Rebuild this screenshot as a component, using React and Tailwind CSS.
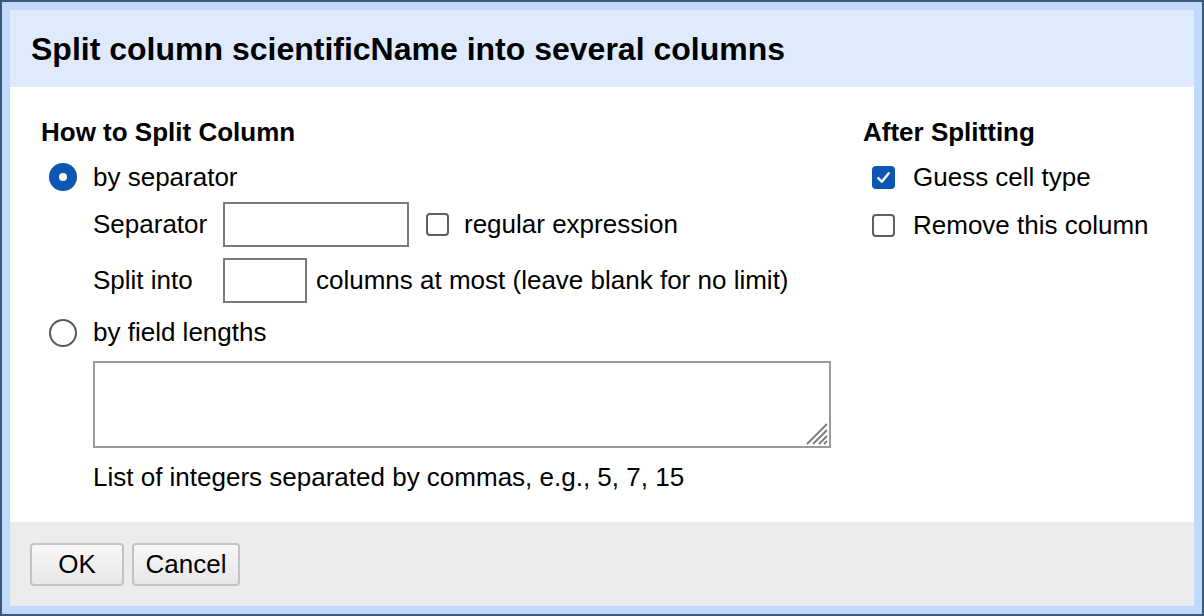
import React from 'react';

const font = { fontFamily: '"Liberation Sans", Arial, sans-serif' };

function Radio({ checked }) {
  if (checked) {
    return (
      <span className="flex h-[28px] w-[28px] shrink-0 items-center justify-center rounded-full bg-[#0b57b2]">
        <span className="h-[8px] w-[8px] rounded-full bg-white" />
      </span>
    );
  }
  return <span className="h-[28px] w-[28px] shrink-0 rounded-full border-2 border-[#5a5a5a] bg-white" />;
}

function Checkbox({ checked }) {
  if (checked) {
    return (
      <span className="flex h-[23px] w-[23px] shrink-0 items-center justify-center rounded-[4px] bg-[#0b57b2]">
        <svg viewBox="0 0 16 16" className="h-[19px] w-[19px]">
          <path d="M3.6 8.6 L6.6 11.6 L12.4 4.4" fill="none" stroke="white" strokeWidth="2" strokeLinecap="round" strokeLinejoin="round" />
        </svg>
      </span>
    );
  }
  return <span className="block h-[23px] w-[23px] shrink-0 rounded-[4px] border-2 border-[#5f5f5f] bg-white" />;
}

export default function App() {
  return (
    <div className="h-[616px] w-[1204px] bg-[#3b5878] p-[2px] text-[26px] text-black" style={font}>
      <div className="flex h-full flex-col bg-[#c1d9fc] p-[8px]">
        <div className="flex h-[77px] shrink-0 items-center bg-[#dfeafd] pl-[21px]">
          <h1 className="text-[32px] font-bold leading-none">Split column scientificName into several columns</h1>
        </div>

        <div className="flex flex-1 bg-white pt-[23px]">
          <div className="flex w-[822px] flex-col pl-[31px]">
            <div className="flex h-[44px] items-center font-bold">How to Split Column</div>
            <div className="flex h-[46px] items-center gap-[16px] pl-[8px]">
              <Radio checked />
              <span>by separator</span>
            </div>
            <div className="flex h-[49px] items-center pl-[52px]">
              <span className="w-[130px]">Separator</span>
              <span className="h-[45px] w-[186px] border-2 border-[#7b7b7b] bg-white" />
              <span className="ml-[17px] mr-[15px] flex">
                <Checkbox />
              </span>
              <span>regular expression</span>
            </div>
            <div className="flex h-[63px] items-center pl-[52px]">
              <span className="w-[130px]">Split into</span>
              <span className="h-[45px] w-[84px] border-2 border-[#7b7b7b] bg-white" />
              <span className="ml-[9px]">columns at most (leave blank for no limit)</span>
            </div>
            <div className="flex h-[41px] items-center gap-[16px] pl-[8px]">
              <Radio />
              <span>by field lengths</span>
            </div>
            <div className="relative ml-[52px] mt-[8px] h-[87px] w-[738px] border-2 border-[#9a9a9a] bg-white">
              <svg viewBox="0 0 24 24" className="absolute bottom-[1px] right-[1px] h-[24px] w-[24px]">
                <path d="M23 3 L3 23 M23 9 L9 23 M23 15 L15 23 M23 20 L20 23" stroke="#7a7a7a" strokeWidth="1.8" fill="none" />
              </svg>
            </div>
            <div className="ml-[52px] mt-[4px] flex h-[50px] items-center">
              List of integers separated by commas, e.g., 5, 7, 15
            </div>
          </div>

          <div className="flex flex-col pl-[31px]">
            <div className="flex h-[44px] items-center font-bold">After Splitting</div>
            <div className="flex h-[46px] items-center gap-[18px] pl-[9px]">
              <Checkbox checked />
              <span>Guess cell type</span>
            </div>
            <div className="flex h-[50px] items-center gap-[18px] pl-[9px]">
              <Checkbox />
              <span>Remove this column</span>
            </div>
          </div>
        </div>

        <div className="flex h-[84px] shrink-0 items-center gap-[8px] bg-[#ececec] pl-[20px]">
          <button className="h-[43px] w-[94px] rounded-[4px] border-2 border-[#c3c3c3] bg-gradient-to-b from-[#f8f8f8] to-[#e6e6e6] text-[26px]">
            OK
          </button>
          <button className="h-[43px] w-[108px] rounded-[4px] border-2 border-[#c3c3c3] bg-gradient-to-b from-[#f8f8f8] to-[#e6e6e6] text-[26px]">
            Cancel
          </button>
        </div>
      </div>
    </div>
  );
}
